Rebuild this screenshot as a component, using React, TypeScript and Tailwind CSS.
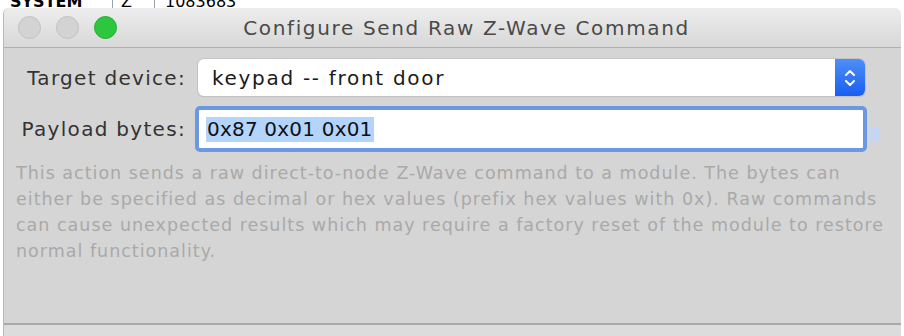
import React from "react";

export default function App() {
  const font = { fontFamily: '"DejaVu Sans", "Liberation Sans", Arial, sans-serif' };
  return (
    <div className="w-[904px] h-[336px] bg-white overflow-hidden flex flex-col" style={font}>
      <div className="h-[8px] overflow-hidden relative shrink-0">
        <div className="flex items-start -mt-[8px] text-[16px] text-black font-semibold leading-[20px]">
          <span className="pl-[10px] w-[113px] border-r border-gray-400">SYSTEM</span>
          <span className="w-[42px] pl-[8px] border-r border-gray-400 font-normal">Z</span>
          <span className="pl-[10px] font-normal">1083683</span>
        </div>
      </div>
      <div className="ml-[3px] w-[898px] flex-1 flex flex-col rounded-t-[6px] overflow-hidden border-l border-[#b8b8b8]">
        <div className="h-[40px] shrink-0 bg-gradient-to-b from-[#ededed] to-[#d8d8d8] border-b border-[#b0b0b0] flex items-center relative">
          <div className="flex items-center gap-[15px] pl-[14px]">
            <div className="w-[23px] h-[23px] rounded-full bg-[#d3d3d3] border border-[#c2c2c2]" />
            <div className="w-[23px] h-[23px] rounded-full bg-[#d3d3d3] border border-[#c2c2c2]" />
            <div className="w-[23px] h-[23px] rounded-full bg-[#2cc63f] border border-[#26b035]" />
          </div>
          <div className="absolute inset-0 flex items-center justify-center pl-[28px] text-[20px] tracking-[1.65px] text-[#4a4a4a] whitespace-nowrap">
            Configure Send Raw Z-Wave Command
          </div>
        </div>
        <div className="h-[277px] shrink-0 bg-[#d5d5d5] border-b-2 border-[#a9a9a9] flex flex-col">
          <div className="flex items-center mt-[11px] h-[37px]">
            <div className="w-[183px] text-right text-[20px] tracking-[1.3px] text-[#333] pr-[1px] whitespace-nowrap">Target device:</div>
            <div className="ml-[11px] w-[667px] h-[37px] bg-white rounded-[6px] shadow-[0_0_0_1px_#c4c4c4,0_1px_1px_#aaa] flex items-center overflow-hidden">
              <div className="flex-1 pl-[14px] text-[20px] tracking-[1.7px] text-[#1a1a1a] whitespace-nowrap">keypad -- front door</div>
              <div className="w-[30px] h-full bg-gradient-to-b from-[#4d8ff8] to-[#1a5cf0] flex items-center justify-center">
                <svg width="12" height="22" viewBox="0 0 12 22" fill="none" stroke="white" strokeWidth="2" strokeLinecap="round" strokeLinejoin="round">
                  <path d="M2 8 L6 4 L10 8" />
                  <path d="M2 14 L6 18 L10 14" />
                </svg>
              </div>
            </div>
          </div>
          <div className="flex items-center mt-[10px] h-[46px] relative">
            <div className="w-[183px] text-right text-[20px] tracking-[1.3px] text-[#333] pr-[1px] whitespace-nowrap">Payload bytes:</div>
            <div className="ml-[8px] w-[672px] h-[46px] rounded-[5px] border-[4px] border-[#6b98e3] bg-white flex items-center pl-[7px]">
              <span className="bg-[#b3d4fd] text-[20px] tracking-[0.2px] text-[#111] leading-[25px] px-[1px] whitespace-nowrap">0x87 0x01 0x01</span>
            </div>
            <div className="absolute left-[866px] top-[21px] w-[10px] h-[14px] bg-[#c4d6f3]" />
          </div>
          <p className="mt-[8px] pl-[12px] pr-[8px] text-[17.5px] leading-[26px] text-[#a9a9a9] tracking-[1px]">
            This action sends a raw direct-to-node Z-Wave command to a module. The bytes can either be specified as decimal or hex values (prefix hex values with 0x). Raw commands can cause unexpected results which may require a factory reset of the module to restore normal functionality.
          </p>
        </div>
        <div className="flex-1 bg-[#dcdcdc]" />
      </div>
    </div>
  );
}
